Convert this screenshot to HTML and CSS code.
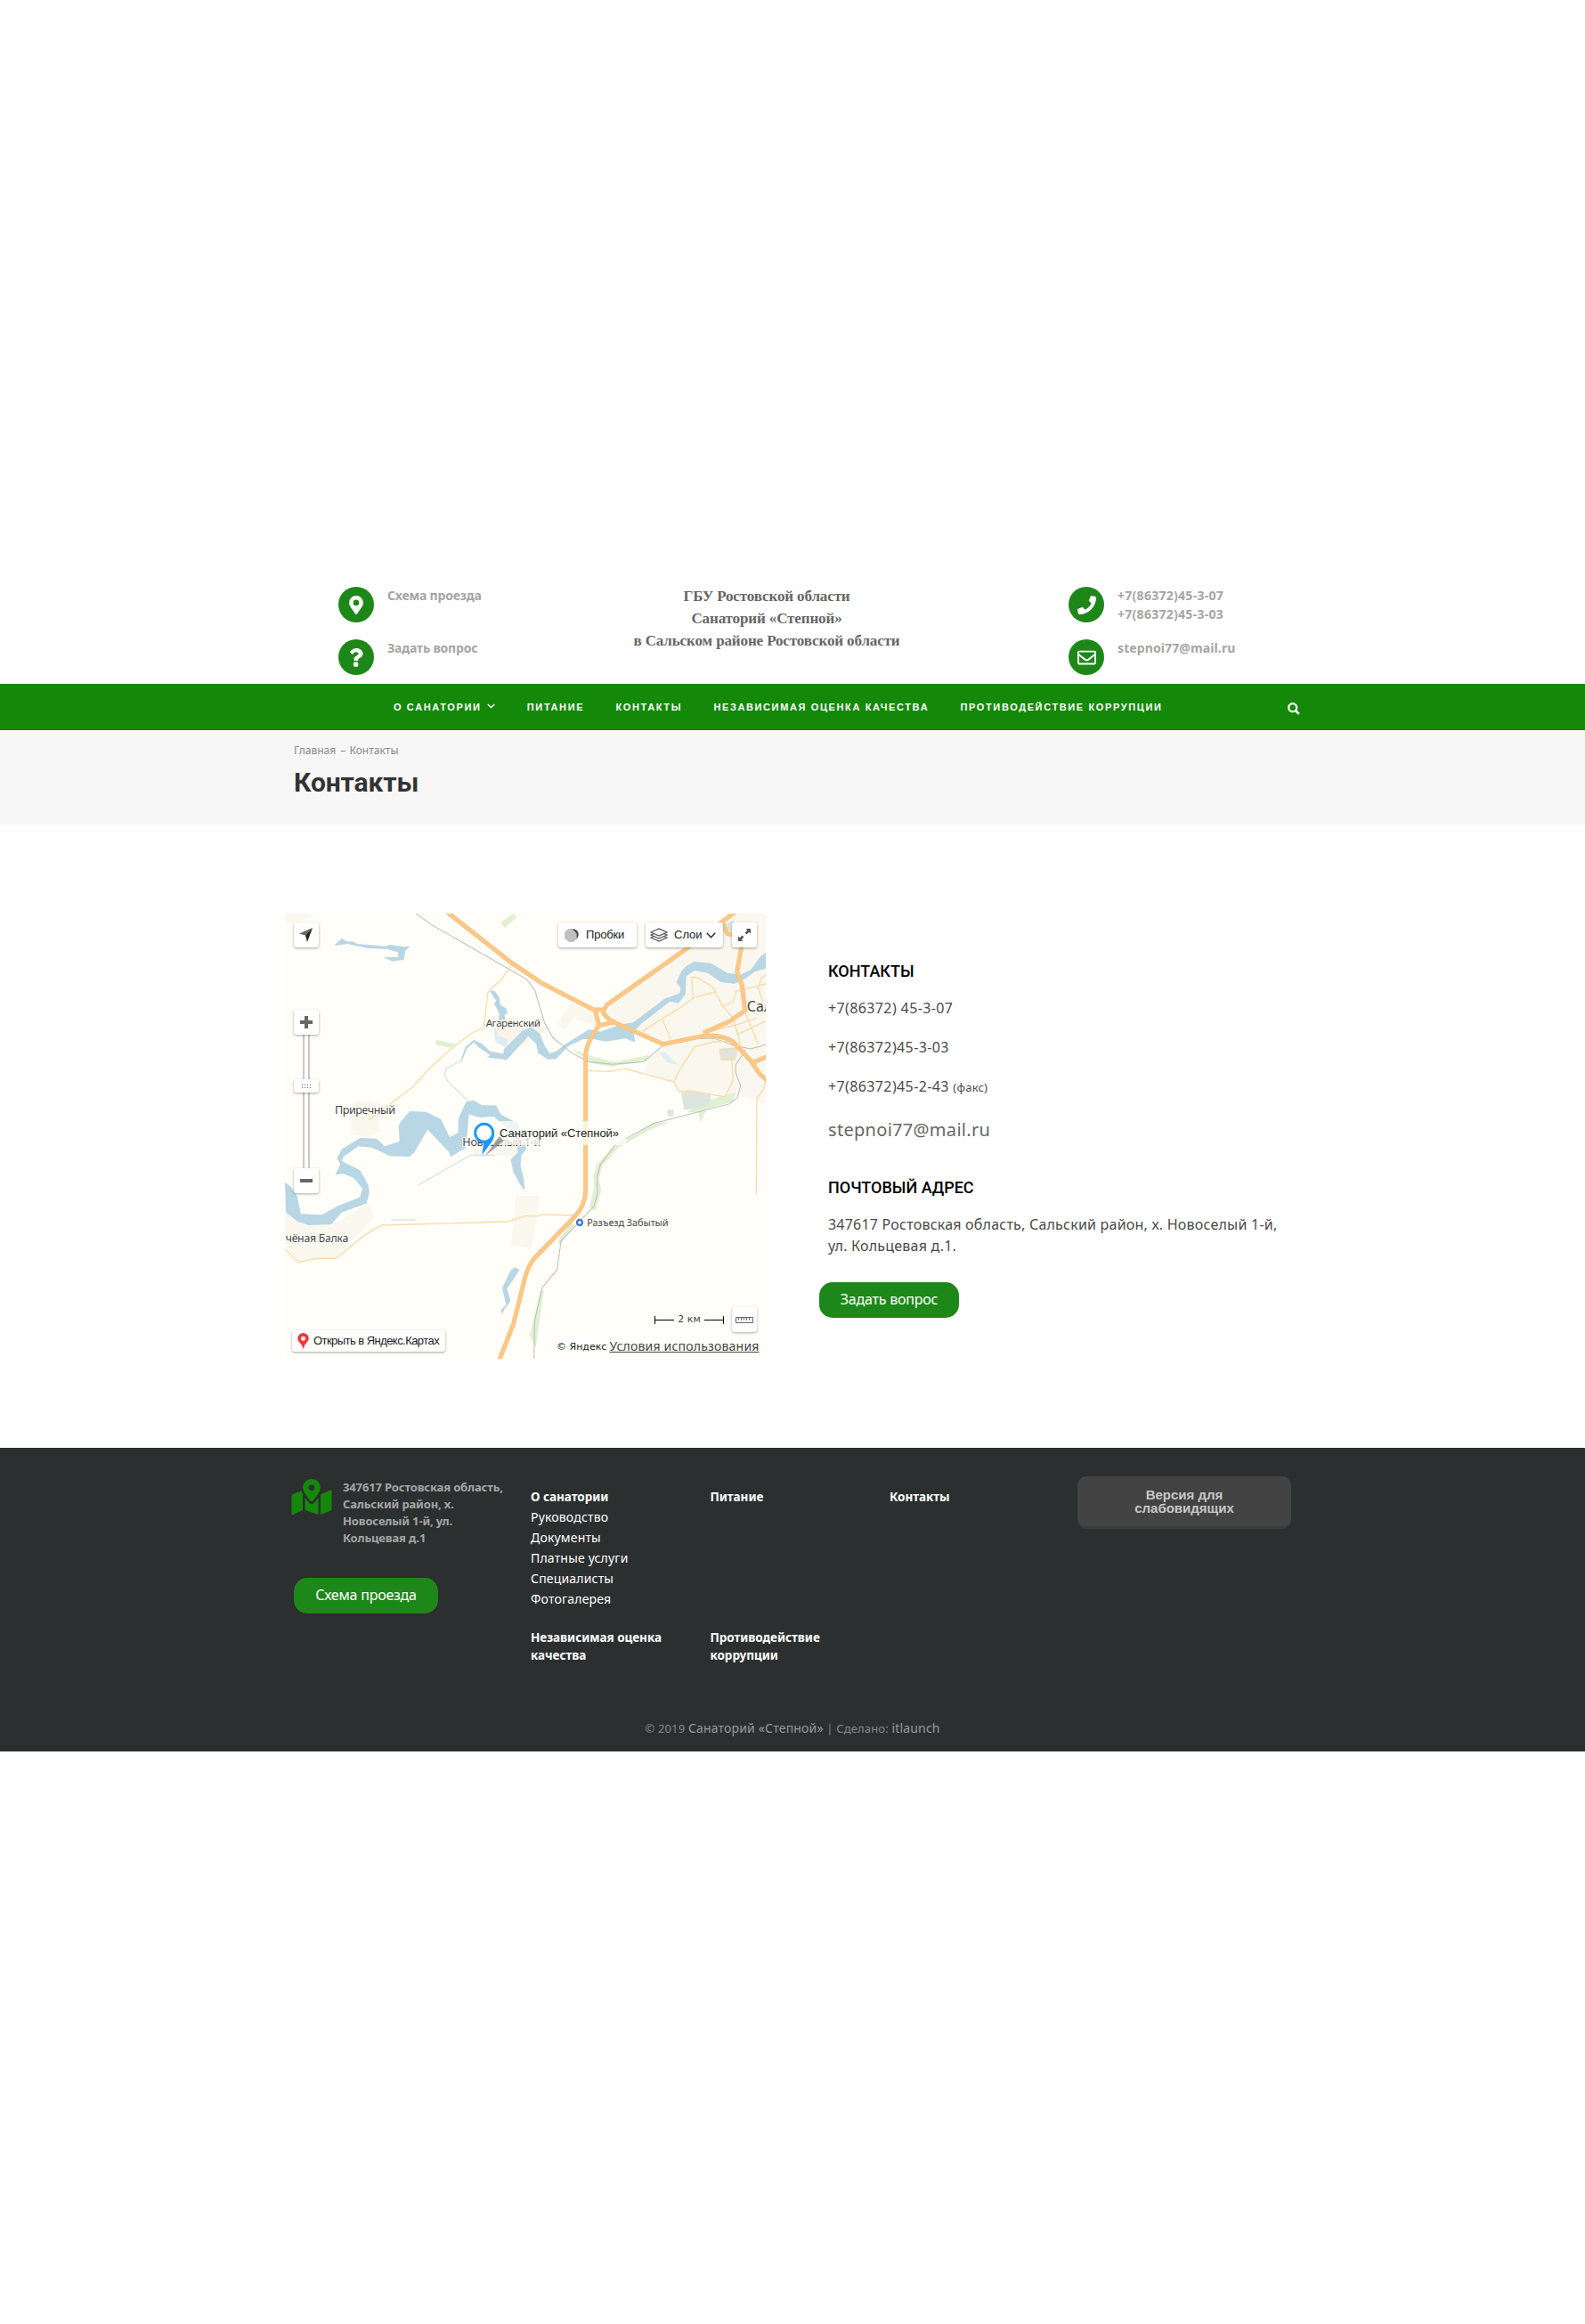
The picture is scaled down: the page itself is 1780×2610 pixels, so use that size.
FILE: index.html
```html
<!DOCTYPE html>
<html lang="ru">
<head>
<meta charset="utf-8">
<title>Контакты</title>
<link rel="stylesheet" href="styles.css">
</head>
<body>
<header class="header">
  <div class="contact-list">
    <div class="contact">
      <span class="circle"><svg width="16" height="21" viewBox="0 0 384 512"><path fill="#fff" fill-rule="evenodd" d="M172 502C27 291 0 270 0 192a192 192 0 1 1 384 0c0 78-27 99-172 310a24 24 0 0 1-40 0zM192 272a80 80 0 1 0 0-160 80 80 0 0 0 0 160z"/></svg></span>
      <p class="contact-text">Схема проезда</p>
    </div>
    <div class="contact">
      <span class="circle"><svg width="16" height="21" viewBox="0 0 384 512"><path fill="#fff" d="M202 0C122 0 70 33 29 91c-7 11-5 25 5 32l43 33c10 8 25 6 33-4 25-32 43-50 81-50 30 0 66 19 66 48 0 22-18 33-47 49-34 20-80 44-80 104v13c0 13 11 24 24 24h73c13 0 24-11 24-24v-8c0-43 125-45 125-160C376 67 287 0 202 0zM192 373a70 70 0 1 0 0 139 70 70 0 0 0 0-139z"/></svg></span>
      <p class="contact-text">Задать вопрос</p>
    </div>
  </div>
  <div class="brand">ГБУ Ростовской области<br>Санаторий «Степной»<br>в Сальском районе Ростовской области</div>
  <div class="contact-list">
    <div class="contact">
      <span class="circle"><svg width="21" height="21" viewBox="0 0 512 512"><path fill="#fff" d="M493 25L389 1c-11-3-23 3-27 14l-48 112c-4 10-1 22 7 28l61 50c-36 77-99 139-177 177l-50-61c-7-8-18-11-28-7L15 362c-11 4-17 16-14 27l24 104c3 11 12 19 23 19 256 0 464-208 464-464 0-11-8-20-19-23z"/></svg></span>
      <p class="contact-text wide">+7(86372)45-3-07<br>+7(86372)45-3-03</p>
    </div>
    <div class="contact">
      <span class="circle"><svg width="21" height="21" viewBox="0 0 512 512"><path fill="#fff" fill-rule="evenodd" d="M464 64H48a48 48 0 0 0-48 48v288a48 48 0 0 0 48 48h416a48 48 0 0 0 48-48V112a48 48 0 0 0-48-48zm0 48v41c-22 18-58 47-134 106-17 13-50 45-74 45s-57-32-74-45C106 200 70 171 48 153v-41h416zM48 400V215c23 18 55 44 105 83 22 17 60 55 103 54 43 1 81-37 103-54 50-39 82-65 105-83v185H48z"/></svg></span>
      <p class="contact-text mail">stepnoi77@mail.ru</p>
    </div>
  </div>
</header>

<nav class="nav">
  <a>О САНАТОРИИ<svg class="caret" width="9" height="6" viewBox="0 0 9 6"><path d="M.8 1l3.700 3.600L8.200 1" fill="none" stroke="#fff" stroke-width="1.400"/></svg></a>
  <a>ПИТАНИЕ</a>
  <a>КОНТАКТЫ</a>
  <a>НЕЗАВИСИМАЯ ОЦЕНКА КАЧЕСТВА</a>
  <a>ПРОТИВОДЕЙСТВИЕ КОРРУПЦИИ</a>
  <svg class="search" width="14" height="14" viewBox="0 0 14 14" fill="none" stroke="#fff"><circle cx="5.700" cy="5.700" r="4.500" stroke-width="2.300"/><path d="M9.100 9.100l3.700 3.700" stroke-width="2.600"/></svg>
</nav>

<section class="title-band">
  <div class="crumbs">Главная <span class="dash">–</span> Контакты</div>
  <h1>Контакты</h1>
</section>

<main class="main">
  <div class="map">
    <svg class="map-art" width="540" height="500" viewBox="30 48 1620 1500">
      <rect x="30" y="48" width="1620" height="1500" fill="#fffef8"/>
      <g fill="#faf7ee">
        <path d="M1100 380L1385 165 1490 80 1530 48H1650V690L1590 668 1480 655 1360 650 1335 618 1240 580 1260 530 1310 490 1210 460Z"/>
        <path d="M740 430l50-35 80 35 60 0-130 80-60-30z" fill="#faf4ea"/>
        <path d="M990 350l85 30 10 50-85-30-25 40-28-15z"/>
        <path d="M265 680h60l45 20-30 40 12 40-42 20-60-10z"/>
        <path d="M30 1040l155 60 125-75 20 45-130 140-125 10-45-50z"/>
        <path d="M808 1000h80l-26 175-70-10z"/>
        <path d="M30 48h93v15l-93 17z"/>
        <path d="M655 860l60-40 110-10 -5 55z"/>
      </g>
      <g fill="#e0f0d3">
        <path d="M757 78l43-30 10 14-40 35z"/>
        <path d="M540 474l70 14-20 12-53-10z"/>
        <path d="M995 505l75 25 70 18 115-23-5 20-120 18-65-10z"/>
        <path d="M1385 715l55-35 110-30-10 32-90 25-20 46-6-32z"/>
        <path d="M890 1320h12l-27 190-20-40zM950 1150l50-70 5 20-50 65z"/>
      </g>
      <g fill="#dde5de">
        <path d="M1495 505l60-5-10 40-45 2zM1365 650l40-5 60 15-5 32-85 18zM1318 710l22-2-2 25-20-3zM1510 85l30-15 15 25-25 15z"/>
      </g>
      <path d="M740 430l10 30 30 10-5 30-35-20-7-37zM1290 515h20l45 42-35-7z" fill="#deedf2"/>
      <g transform="scale(1.110 1.014)">
        <path fill="#e0f0d3" d="M1100 775L1145 745 1195 740 1130 768 1040 825 990 885 980 930 987 965 970 1035 950 1025 965 960 963 920 975 880 1030 820z"/>
        <g fill="#b8d6e4">
          <path d="M560 538L575 490 600 467 625 480 650 505 690 513 692 498 750 435 775 425 800 445 815 485 830 512 850 505 880 480 950 432 985 440 1040 418 1085 408 1180 330 1225 312 1228 295 1215 275 1230 240 1245 222 1268 207 1320 212 1370 245 1410 250 1440 235 1470 190 1487 177V230L1455 240 1415 270 1390 280 1350 275 1310 245 1270 237 1245 255 1243 315 1222 345 1195 340 1110 412 1085 440 1090 475 1060 462 1000 473 960 463 930 465 885 490 850 530 825 532 795 510 790 480 765 455 740 485 700 533 640 525 650 518 615 492 600 475 580 495 562 542z"/>
          <path d="M372 752L378 740 405 704 455 706 500 730 527 790 553 775 553 730 577 672 600 668 625 684 668 685 683 715 735 745 760 830 745 850 742 885 752 930 755 970 740 945 720 905 712 865 735 840 720 775 660 722 620 725 585 715 580 780 575 825 530 856 525 840 460 765 420 840 405 855 345 853 330 845 290 825 250 820 205 855 200 870 255 900 280 950 283 975 275 1010 200 1040 168 1080 100 1083 65 1070 30 1040 27 940 45 955 65 990 75 1045 140 1048 185 1020 255 990 262 960 235 925 205 912 180 915 195 880 185 860 200 830 255 793 305 795 330 820 375 805z"/>
        </g>
        <path fill="none" stroke="#bdbdbd" stroke-width="2.800" d="M425 47L470 83 760 265 785 300 815 410 840 460 900 512 950 540 1020 548 1115 540 1175 485 1260 462 1330 462 1390 485 1440 497 1487 483M1425 500L1395 550 1395 575 1410 620 1400 660 1375 680 1145 745 1030 815 985 880 975 920 975 980 965 1020 865 1135 853 1230 808 1290 785 1400 783 1530"/>
      </g>
      <g fill="#b8d6e4">
        <path d="M198 152l24-20 16 10 24 1 10 7 98 8 15-5 45 7 22-2-17 17-4 28-39 6-30-14h50l-1-17-41-11-60-2-70-15-40 6z"/>
        <path d="M720 305l18 5 14 20 3 25 23 15v15l-8 5 2 15-22 3 2-23-17-35 7-8-17-24z"/>
        <path d="M762 1310l28-60 15-10 15 8-20 32-22 32 12 38-5 12-15 18-8 18-4-14 17-18z"/>
      </g>
      <g fill="none" stroke="#c3dae6" stroke-width="3">
        <path d="M620 545l-45 25-7 20 12 25 68 65M480 962l175-100h80M388 1080h82"/>
      </g>
      <g fill="none" stroke="#f8dcab" stroke-width="4">
        <path d="M795 218l-33 49-48 45-14 120-40 18-75 58-65 59-60 66-148 110"/>
        <path d="M30 1178l45 45 60-13h68l97-80 55-32 425-12 60-19h45l10-5 110 3"/>
        <path d="M1052 578l73 2 50-10 165 45 18 33 32-3 122 20 28-55-5-70"/>
        <path d="M1340 615l20-40 50-78 65-17 55-2M1235 445l65-43 70-42 35-28 75-20-5-14-55-34-20-2 5 70M1300 402l30 70M1480 312l25 48 35 40 20 70 5 30M1505 360l35-15 10-35 100-25M1580 380l45 110M1440 450l120-30 60-20M1555 455l95-45M1640 345l-15-45 10-35 15-10M1495 505l60-5-10 40-45 2zM1650 610l-8 30-22 30-2 325"/>
      </g>
      <g fill="none" stroke-linejoin="round">
        <g stroke="#f6bd7e" stroke-width="15">
          <path d="M570 38l225 177 75 50 20 15 180 92h30q5 28 45 45l160 71 135-28q60-5 100 20l60 65 30 45 25 20"/>
          <path d="M1550 40l-165 125-270 190-10 17M1075 372l13 53 57-12M1088 425q-45 60-45 105v450q0 50-38 90l-135 140q-22 30-30 60l-40 160-50 128M1568 160l-15 85 17 45 10 85-50 35-90 40M1500 70l20 45 15 5M1605 550l50-20"/>
        </g>
        <g stroke="#fec886" stroke-width="11">
          <path d="M570 38l225 177 75 50 20 15 180 92h30q5 28 45 45l160 71 135-28q60-5 100 20l60 65 30 45 25 20"/>
          <path d="M1550 40l-165 125-270 190-10 17M1075 372l13 53 57-12M1088 425q-45 60-45 105v450q0 50-38 90l-135 140q-22 30-30 60l-40 160-50 128M1568 160l-15 85 17 45 10 85-50 35-90 40M1500 70l20 45 15 5M1605 550l50-20"/>
        </g>
      </g>
      <circle cx="1023" cy="1089" r="9" fill="#fff" stroke="#3f7ac9" stroke-width="7"/>
      <g class="place" font-size="38">
        <text x="707" y="430" font-size="35" textLength="184">Агаренский</text>
        <text x="198" y="723" textLength="204">Приречный</text>
        <text x="32" y="1155" font-size="37" textLength="212">чёная Балка</text>
        <text x="1048" y="1102" font-size="33" textLength="274">Разъезд Забытый</text>
        <text x="1586" y="378" font-size="48">Сал</text>
        <text x="628" y="830" textLength="264">Новоселый 1-й</text>
      </g>
      <rect x="700" y="747" width="480" height="81" fill="#fffef8" fill-opacity=".75"/>
      <path d="M705 864l62-50-14-16z" fill="#777" opacity=".7"/>
      <path d="M694 861l6-44-10-10 46-12-8 20z" fill="#1e98ff"/>
      <circle cx="701" cy="787" r="30" fill="#fffef8" stroke="#1e98ff" stroke-width="9"/>
      <text class="pin-text" x="753" y="802" font-size="39" textLength="402">Санаторий «Степной»</text>
    </svg>

    <div class="ctl geo"><svg width="16" height="16" viewBox="0 0 16 16"><path d="M15 0L0 6.500l7 2z" fill="#666"/><path d="M15 0L9 16 7 8.500z" fill="#222"/></svg></div>
    <div class="rail"></div>
    <div class="ctl plus"><svg width="14" height="14" viewBox="0 0 14 14"><path d="M5 0h4v5h5v4H9v5H5V9H0V5h5z" fill="#666"/></svg></div>
    <div class="ctl grip"><svg width="10" height="4" viewBox="0 0 10 4"><path d="M0 .5h10M0 3.500h10" stroke="#666" stroke-dasharray="1 2"/></svg></div>
    <div class="ctl minus"><svg width="14" height="4"><rect width="14" height="4" fill="#666"/></svg></div>
    <div class="ctl traffic"><svg width="16" height="15" viewBox="0 0 16 15"><circle cx="9.500" cy="6.500" r="6.200" fill="#444"/><path d="M4 .5h5l4.500 5v5L10 14.500H5L.500 11V4z" fill="#c0c0c0" stroke="#aaa" stroke-width=".5"/></svg><span>Пробки</span></div>
    <div class="ctl layers"><svg width="20" height="16" viewBox="0 0 20 16" fill="#fff" stroke="#555" stroke-width="1.300"><path d="M1 11l9-4 9 4-9 4z"/><path d="M1 8l9-4 9 4-9 4z"/><path d="M1 5l9-4 9 4-9 4z"/></svg><span>Слои</span><svg width="11" height="7" viewBox="0 0 11 7"><path d="M.8.8l4.700 5 4.700-5" fill="none" stroke="#222" stroke-width="1.300"/></svg></div>
    <div class="ctl full"><svg width="14" height="14" viewBox="0 0 14 14" fill="#555"><path d="M8.500 0H14v5.500l-1.800-1.800-2.700 2.700L7.600 4.500l2.700-2.700zM5.500 14H0V8.500l1.800 1.800 2.700-2.700 1.900 1.900-2.700 2.700z"/></svg></div>
    <div class="ctl ruler"><svg width="20" height="7" viewBox="0 0 20 7"><path d="M.5.5h19v6H.5zM3.500 1v2.500M6.500 1v3M9.500 1v2.500M12.500 1v3M15.500 1v2.500" fill="none" stroke="#666"/></svg></div>
    <div class="scale"><i></i><span>2 км</span><i class="end"></i></div>
    <div class="ctl open"><svg width="13" height="18" viewBox="0 0 13 18"><path fill-rule="evenodd" fill="#fb3434" d="M6.500 0a6.200 6.200 0 0 1 6.200 6.200c0 4-5.200 5.300-5.500 11.300h-1C6.200 12.500.3 10.500.3 6.200A6.200 6.200 0 0 1 6.500 0zm0 8.700a2.500 2.500 0 1 0 0-5 2.500 2.500 0 0 0 0 5z"/></svg><span>Открыть в Яндекс.Картах</span></div>
    <div class="legal"><span>© Яндекс</span><a>Условия использования</a></div>
  </div>

  <div class="info">
    <h2>КОНТАКТЫ</h2>
    <p class="phone">+7(86372) 45-3-07</p>
    <p class="phone">+7(86372)45-3-03</p>
    <p class="phone">+7(86372)45-2-43 <small>(факс)</small></p>
    <p class="email">stepnoi77@mail.ru</p>
    <h2>ПОЧТОВЫЙ АДРЕС</h2>
    <p class="address">347617 Ростовская область, Сальский район, х. Новоселый 1-й,<br>ул. Кольцевая д.1.</p>
    <a class="btn">Задать вопрос</a>
  </div>
</main>

<footer class="footer">
  <div class="footer-cols">
    <div class="where">
      <div class="where-row">
        <svg width="46" height="40" viewBox="0 0 576 512"><path fill="#148809" fill-rule="evenodd" d="M288 0c-70 0-126 56-126 126 0 56 82 159 113 195 7 8 19 8 26 0 31-36 113-139 113-195C414 56 358 0 288 0zm0 168a42 42 0 1 1 0-84 42 42 0 0 1 0 84zM20 216A32 32 0 0 0 0 246v250c0 11 11 19 22 15l138-63V215c-9-16-16-32-21-47zM288 360c-14 0-27-6-37-17-19-22-40-48-59-75v180l192 64V268c-19 27-40 53-59 75-10 11-23 17-37 17zm266-199l-138 63v288l140-56a32 32 0 0 0 20-30V176c0-11-11-19-22-15z"/></svg>
        <p>347617 Ростовская область,<br>Сальский район, х.<br>Новоселый 1-й, ул.<br>Кольцевая д.1</p>
      </div>
      <a class="btn btn-map">Схема проезда</a>
    </div>
    <div class="links">
      <div class="col"><b>О санатории</b><a>Руководство</a><a>Документы</a><a>Платные услуги</a><a>Специалисты</a><a>Фотогалерея</a></div>
      <div class="col"><b>Питание</b></div>
      <div class="col"><b>Контакты</b></div>
      <div class="col"><b>Независимая оценка<br>качества</b></div>
      <div class="col"><b>Противодействие<br>коррупции</b></div>
    </div>
    <a class="accessible">Версия для<br>слабовидящих</a>
  </div>
  <p class="copyright">© 2019 <a>Санаторий «Степной»</a> | Сделано: <a>itlaunch</a></p>
</footer>
</body>
</html>
```
FILE: styles.css
```css
* { box-sizing: border-box; }
body {
  margin: 0;
  padding-top: 657px;
  height: 2610px;
  background: #fff;
  font-family: "Noto Sans", "Open Sans", sans-serif;
  color: #4a4a4a;
}
p, h1, h2 { margin: 0; }
svg { flex: none; }

.header {
  display: grid;
  grid-template-columns: 266px 430px 1fr;
  height: 111px;
  padding-left: 380px;
}
.header .contact-list:last-child { padding-left: 124px; }
.contact-list { padding-top: 2px; }
.contact { display: flex; gap: 15px; height: 59px; white-space: nowrap; }
.circle {
  flex: none;
  display: flex;
  align-items: center;
  justify-content: center;
  width: 40px;
  height: 40px;
  border-radius: 50%;
  background: #1e8719;
}
.contact-text { margin-top: -1px; font-size: 14px; line-height: 21px; font-weight: 700; color: #a5a5a5; letter-spacing: -.19px; }
.contact-text.wide { letter-spacing: .28px; }
.contact-text.mail { letter-spacing: .11px; }
.brand {
  text-align: center;
  font: 700 17px/25px "Liberation Serif", serif;
  letter-spacing: -.12px;
  color: #666;
}

.nav {
  display: flex;
  align-items: center;
  gap: 35.300px;
  height: 52px;
  padding: 0 320px 0 442px;
  background: #148809;
  border-bottom: 1px solid #0f7306;
  font: 700 11px/20px "Liberation Sans", sans-serif;
  letter-spacing: 1.620px;
  color: #fff;
}
.nav .caret { margin: 0 1px 2px 6px; }
.nav .search { margin: 5px 0 0 auto; }

.title-band { height: 106px; padding: 13px 330px 0; background: #f7f7f7; }
.crumbs { font-size: 12px; line-height: 20px; color: #888; letter-spacing: 0; }
.crumbs .dash { margin: 0 1px 0 2px; }
.title-band h1 { padding-top: 8px; font: 700 30px/35px Roboto, sans-serif; letter-spacing: -.1px; color: #333; }

.main { display: flex; gap: 60px; height: 700px; padding: 100px 320px; }
.map { position: relative; flex: none; width: 540px; height: 500px; overflow: hidden; font: 13px/20px "Liberation Sans", sans-serif; color: #222; }
.map-art { display: block; }
.place text { font-family: "Noto Sans", sans-serif; fill: #444; stroke: #fffef8; stroke-width: 6; paint-order: stroke; }
.pin-text { font-family: "Liberation Sans", sans-serif; fill: #222; }
.ctl {
  position: absolute;
  display: flex;
  align-items: center;
  justify-content: center;
  width: 28px;
  height: 28px;
  background: #fff;
  border-radius: 3px;
  box-shadow: 0 1px 3px rgba(0, 0, 0, .35);
  white-space: nowrap;
}
.geo { left: 10px; top: 10px; }
.plus { left: 10px; top: 108px; }
.grip { left: 10px; top: 186px; height: 15px; }
.minus { left: 10px; top: 286px; }
.rail { position: absolute; left: 20px; top: 136px; width: 8px; height: 150px; border: solid #c9c8c4; border-width: 0 2px; background: #fff; }
.traffic { left: 307px; top: 10px; width: 88px; gap: 8px; justify-content: flex-start; padding-left: 7px; letter-spacing: -.2px; }
.layers { left: 405px; top: 10px; width: 87px; gap: 7px; justify-content: flex-start; padding-left: 5px; }
.layers span { margin-right: -3px; }
.full { left: 502px; top: 10px; }
.ruler { left: 502px; top: 442px; }
.open { left: 8px; top: 468px; width: 172px; height: 24px; gap: 5px; justify-content: flex-start; padding-left: 6px; letter-spacing: -.55px; }
.scale { position: absolute; left: 415px; top: 447px; display: flex; align-items: center; font: 11px/18px "DejaVu Sans", sans-serif; color: #444; }
.scale span { width: 34px; text-align: center; }
.scale i { width: 22px; height: 9px; border-left: 1px solid #000; background: linear-gradient(#000, #000) 0 4px / 100% 1px no-repeat; }
.scale .end { border-left: 0; border-right: 1px solid #000; }
.legal { position: absolute; right: 0; top: 475px; width: 240px; height: 20px; padding-left: 5px; display: flex; gap: 3px; background: rgba(255, 255, 255, .7); font: 11px/23px "DejaVu Sans", sans-serif; white-space: nowrap; }
.legal a { font: 14px/21px "Noto Sans", sans-serif; letter-spacing: .2px; color: #444; text-decoration: underline; }

.info { padding: 55px 0 0 10px; font-size: 16px; line-height: 24px; letter-spacing: .22px; white-space: nowrap; }
.info h2 { font: 500 18px/20px Roboto, sans-serif; color: #000; letter-spacing: 0; }
.phone { padding-top: 20px; letter-spacing: .38px; }
.phone small { font-size: 13px; letter-spacing: .2px; }
.info h2 + .phone { padding-top: 19px; }
.info .email { padding: 21px 0 40px; font-size: 20px; line-height: 30px; letter-spacing: .3px; color: #666; }
.info .address { padding: 19px 0 29px; }
.btn {
  display: block;
  width: 157px;
  height: 40px;
  border-radius: 15px;
  background: #1e8719;
  color: #fff;
  font-size: 16px;
  line-height: 38px;
  letter-spacing: -.22px;
  text-align: center;
}
.info .btn { margin-left: -10px; }

.footer { height: 341px; padding-top: 32px; background: #2c2f30; }
.footer-cols { display: flex; height: 268px; padding-left: 327px; }
.where { flex: none; width: 269px; }
.where-row { display: flex; gap: 12px; padding-top: 3px; height: 114px; }
.where-row p { font-size: 13px; line-height: 19px; font-weight: 700; letter-spacing: -.14px; color: #a5a5a5; white-space: nowrap; }
.btn-map { width: 162px; margin-left: 3px; }
.links { display: grid; grid-template-columns: repeat(3, 201.500px); grid-template-rows: 158px auto; width: 614px; padding-top: 12px; align-content: start; }
.col { display: flex; flex-direction: column; color: #fff; font-size: 14px; line-height: 23px; letter-spacing: .18px; }
.col b { font-size: 13.500px; line-height: 20px; padding: 0 0 1px; margin-top: 1px; letter-spacing: -.04px; }
.accessible {
  width: 240px;
  height: 59px;
  padding-top: 13px;
  border-radius: 10px;
  border-bottom: 3px solid #3b3b3b;
  background: #434343;
  font: 700 15px/15px "Liberation Sans", sans-serif;
  text-align: center;
  color: #c8c8c8;
}
.copyright { text-align: center; font-size: 13px; line-height: 30px; letter-spacing: .17px; color: #888; }
.copyright a { font-size: 14px; color: #999; }
```
